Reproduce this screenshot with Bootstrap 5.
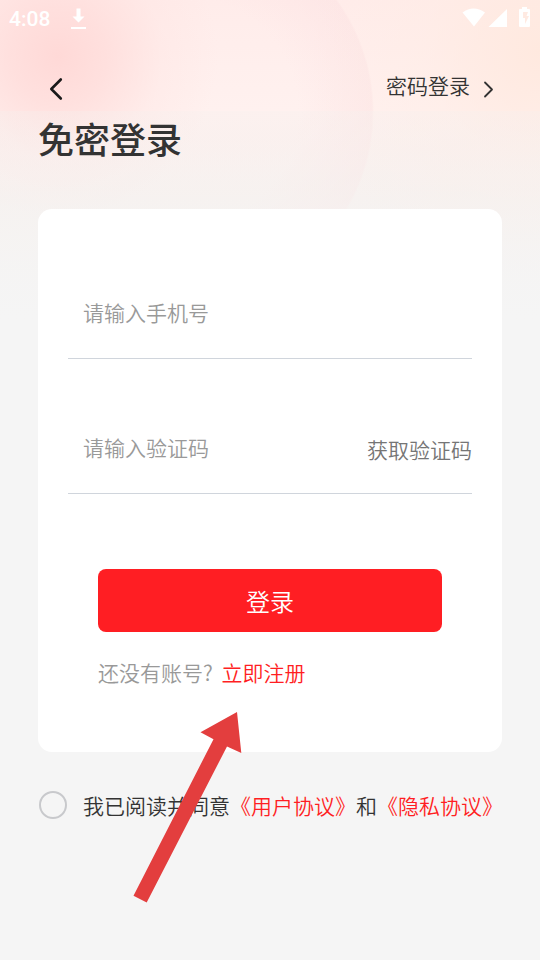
<!DOCTYPE html>
<html lang="zh-CN">
<head>
<meta charset="utf-8">
<meta name="viewport" content="width=device-width, initial-scale=1">
<title>免密登录</title>
<link href="https://cdn.jsdelivr.net/npm/bootstrap@5.3.0/dist/css/bootstrap.min.css" rel="stylesheet">
<style>
  :root { --brand: #ff1e23; --ink: #333; --muted: #999; }
  body {
    font-family: "Noto Sans CJK SC", sans-serif; font-weight: 350;
    font-size: 21px; line-height: 30px; color: var(--ink);
    background:
      linear-gradient(#f5f0ee00 111px, #f5f0ee50 111px, #f5f2f090 190px, #f5f5f5 320px) no-repeat,
      radial-gradient(circle 160px at 58px 56px, #ffd9d7 0, #ffdbd9c0 30%, #ffe2e050 65%, #ffe6e400 100%) no-repeat,
      radial-gradient(circle 230px at 100% 50px, #ffe9df 0, #ffebe260 50%, #ffeee800 100%) no-repeat,
      radial-gradient(circle 191px at 0 112px, #fbdfe100 60%, #fbdfe170 99%, #fbdfe100 100%) 183px 0 / 192px 310px no-repeat,
      linear-gradient(#ffecea 0, #fff1ef 111px, #fdf0ee 150px, #f8f1ef 200px, #f5f5f5 310px);
    background-color: #f5f5f5;
  }
  .status-bar { height: 38px; padding: 0 10px 0 9px; color: #fff; font-family: Roboto, sans-serif; font-weight: 500; }
  .status-bar svg { margin-bottom: 2px; }
  .top-bar { height: 73px; padding: 12px 42px 0 46px; }
  .page-body { padding: 0 38px; }
  .page-title { font-size: 36px; line-height: 54px; font-weight: 500; margin-bottom: 44px; }
  .login-panel { border-radius: 14px; padding: 60px 30px 64px; }
  .field-row { height: 90px; border-bottom: 1px solid #d0d5dc; }
  .field-row + .field-row { margin-top: 45px; }
  .field-row input { border: 0; border-radius: 0; padding: 0 15px 4px; font-size: 21px; font-weight: 350; line-height: 30px; background: none; min-width: 0; }
  .field-row input::placeholder { color: var(--muted); opacity: 1; }
  .field-row input:focus { box-shadow: none; }
  .code-btn { font-size: 21px; font-weight: 350; line-height: 30px; color: #757575; }
  .panel-actions { padding: 75px 30px 0; }
  .login-btn { height: 63px; border-radius: 8px; font-size: 24px; font-weight: 350; color: #fff;
    --bs-btn-hover-color: #fff; --bs-btn-hover-bg: #e5161b; background: var(--brand); }
  .register-line { color: var(--muted); margin-top: 25px; }
  .login-panel { padding-bottom: 65px; }
  a.brand-link { color: var(--brand); text-decoration: none; }
  .agree-row { margin-top: 38px; gap: 16px; padding-left: 1px; }
  .agree-row .agree-check { width: 28px; height: 28px; margin: 0; border: 2px solid #c8c9cc; border-radius: 50%; background-color: transparent; }
  .agree-row .agree-check:checked { background-color: var(--brand); border-color: var(--brand); }
  .pointer-arrow { left: 95px; bottom: -83px; pointer-events: none; }
</style>
<script src="https://cdn.jsdelivr.net/npm/bootstrap@5.3.0/dist/js/bootstrap.bundle.min.js"></script>
</head>
<body class="min-vh-100">
  <div class="status-bar d-flex align-items-center justify-content-between">
    <div class="d-flex align-items-center gap-3">
      <span>4:08</span>
      <svg width="24" height="24" viewBox="0 0 24 24" fill="#fff" aria-hidden="true"><path d="M10.500 2.500h4v8h4l-6 6-6-6h4zM5 21h15v2H5z"/></svg>
    </div>
    <svg width="68" height="24" viewBox="0 0 68 24" fill="#fff" aria-hidden="true">
      <path d="M0.500 6.500Q11.500-1.500 23 6.500L12 20.500z"/>
      <path d="M45 3v18H26.500z"/>
      <path fill-rule="evenodd" d="M60 1h5v2h2q1 0 1 1v16q0 1-1 1h-9q-1 0-1-1V4q0-1 1-1h2zM61 6v6h2v6l4-8h-2.500l1.500-4z" />
    </svg>
  </div>

  <header class="top-bar d-flex align-items-center justify-content-between">
    <button type="button" class="btn border-0 p-0 d-flex mt-3" aria-label="返回">
      <svg width="20" height="24" viewBox="0 0 20 24" fill="none" stroke="#1a1a1a" stroke-width="2.600" stroke-linecap="round" stroke-linejoin="round" aria-hidden="true"><path d="M14.800 2.500L5.300 12l9.500 9.500"/></svg>
    </button>
    <a href="#password" class="d-flex align-items-center text-decoration-none text-reset mt-2">
      <span class="me-2">密码登录</span>
      <svg class="mt-2" width="20" height="20" viewBox="0 0 20 20" fill="none" stroke="#333" stroke-width="1.800" stroke-linecap="round" stroke-linejoin="round" aria-hidden="true"><path d="M7 3.500l7 7-7 7"/></svg>
    </a>
  </header>

  <main class="page-body">
    <h1 class="page-title">免密登录</h1>
    <form class="position-relative">
      <section class="login-panel bg-white">
        <div class="field-row d-flex align-items-center">
          <input type="tel" class="form-control" placeholder="请输入手机号" aria-label="手机号">
        </div>
        <div class="field-row d-flex align-items-center">
          <input type="text" class="form-control flex-fill" placeholder="请输入验证码" aria-label="验证码">
          <button type="button" class="code-btn btn border-0 p-0 flex-shrink-0">获取验证码</button>
        </div>
        <div class="panel-actions">
          <button type="submit" class="login-btn btn border-0 w-100 p-0">登录</button>
          <p class="register-line mb-0">还没有账号? <a class="brand-link ms-1" href="#register">立即注册</a></p>
        </div>
      </section>
      <div class="agree-row d-flex align-items-center">
        <input class="agree-check form-check-input flex-shrink-0" type="checkbox" id="agree">
        <label for="agree" class="text-nowrap">我已阅读并同意<a class="brand-link" href="#terms">《用户协议》</a>和<a class="brand-link" href="#privacy">《隐私协议》</a></label>
      </div>
      <svg class="pointer-arrow position-absolute" width="109" height="192" viewBox="0 0 109 192" fill="#e33e3e" aria-hidden="true"><path d="M104 1L67.500 21.300 80.500 28.200 0.500 184.800 13.700 191.400 94 35.500 108.300 42z"/></svg>
    </form>
  </main>
</body>
</html>
